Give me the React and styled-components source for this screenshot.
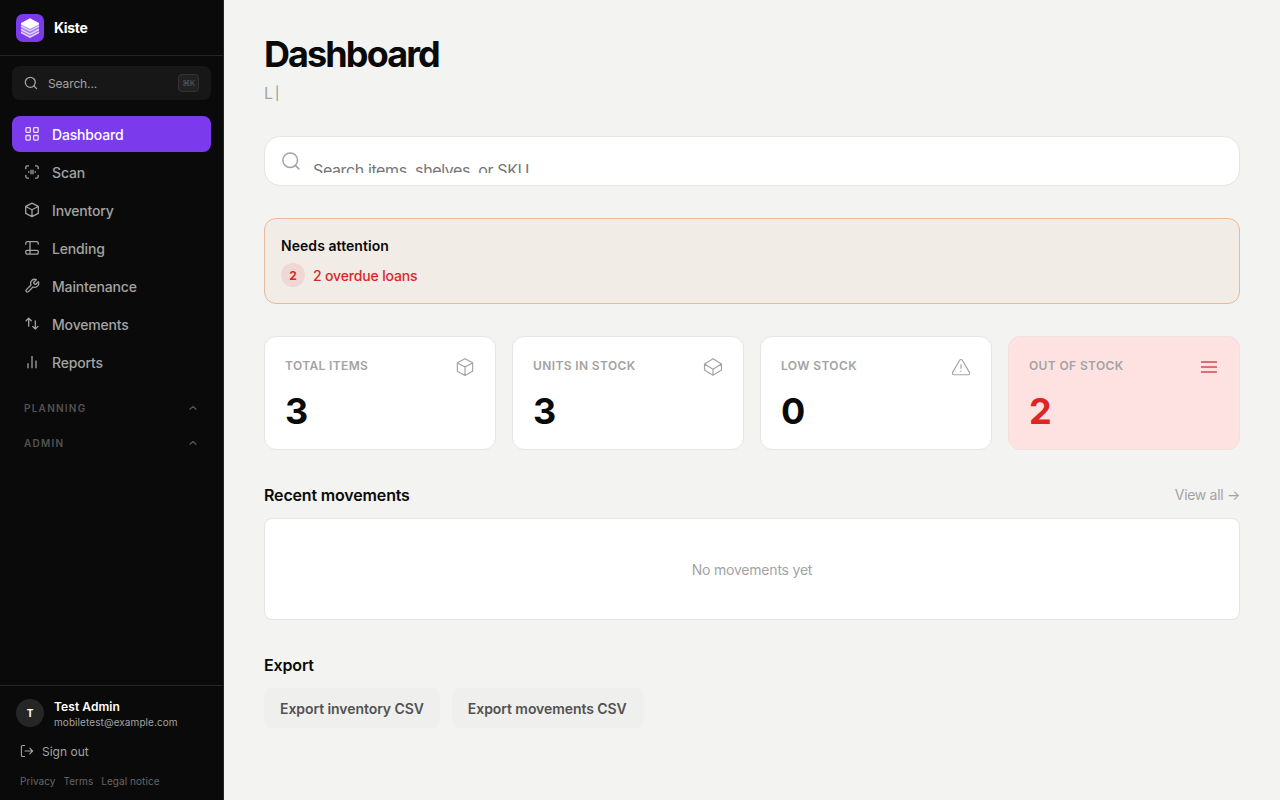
import React from "react";
import styled, { createGlobalStyle, css } from "styled-components";

const Global = createGlobalStyle`
  *, *::before, *::after { box-sizing: border-box; }
  body { margin: 0; background: #f3f3f1; color: #0a0a0a; font-family: Inter, "Liberation Sans", sans-serif; font-size: 14px; -webkit-font-smoothing: antialiased; }
  button, input { font: inherit; }
  h1, h2, p { margin: 0; }
  a { color: inherit; text-decoration: none; }
`;

const Shell = styled.div`
  display: flex;
  height: 100vh;
  overflow: hidden;
`;

/* ---- Sidebar ---- */
const Sidebar = styled.aside`
  width: 224px;
  flex: none;
  display: flex;
  flex-direction: column;
  background: #0a0a0a;
  border-right: 1px solid #262626;
`;
const Brand = styled.div`
  height: 56px;
  flex: none;
  display: flex;
  align-items: center;
  gap: 10px;
  padding: 0 16px;
  border-bottom: 1px solid #262626;
  color: #fff;
  font-size: 14px;
  font-weight: 700;
  letter-spacing: -0.025em;
`;
const Logo = styled.svg`
  width: 28px;
  height: 28px;
`;
const QuickSearch = styled.button`
  margin: 10px 12px 0;
  height: 34px;
  flex: none;
  display: flex;
  align-items: center;
  gap: 10px;
  padding: 0 12px;
  border: 0;
  border-radius: 8px;
  background: #171717;
  color: #a3a3a3;
  font-size: 12px;
  letter-spacing: -0.01em;
  text-align: left;
`;
const QuickLabel = styled.span`
  flex: 1;
`;
const Kbd = styled.kbd`
  width: 21px;
  height: 18px;
  display: grid;
  place-items: center;
  border: 1px solid #333;
  border-radius: 4px;
  background: #222;
  color: #5c5c5c;
  font-family: inherit;
  font-size: 8px;
  letter-spacing: -0.04em;
`;
const Nav = styled.nav`
  flex: 1;
  display: flex;
  flex-direction: column;
  gap: 2px;
  padding: 16px 12px;
`;
const NavItem = styled.a`
  height: 36px;
  display: flex;
  align-items: center;
  gap: 12px;
  padding: 0 12px;
  border-radius: 8px;
  color: #a3a3a3;
  font-size: 14px;
  font-weight: 500;
  line-height: 20px;
  letter-spacing: -0.012em;
  span { padding-top: 2px; }
  ${(p) => p.$active && css`
    background: #7c3aed;
    color: #fff;
    svg { opacity: 0.85; }
  `}
`;
const NavGroup = styled.button`
  height: 33px;
  display: flex;
  align-items: center;
  justify-content: space-between;
  padding: 0 13px 0 12px;
  border: 0;
  background: none;
  color: #525252;
  font-size: 10px;
  font-weight: 600;
  letter-spacing: 0.125em;
  text-transform: uppercase;
  &:first-of-type { margin-top: 9px; }
`;
const Account = styled.div`
  height: 115px;
  border-top: 1px solid #262626;
  padding: 13px 16px 0;
`;
const UserRow = styled.div`
  display: flex;
  align-items: flex-start;
  gap: 10px;
`;
const Avatar = styled.div`
  width: 28px;
  height: 28px;
  display: grid;
  place-items: center;
  border-radius: 50%;
  background: #262626;
  color: #fff;
  font-size: 10px;
  font-weight: 700;
`;
const UserName = styled.div`
  color: #fff;
  font-size: 12px;
  font-weight: 600;
  line-height: 16px;
  letter-spacing: 0.006em;
`;
const UserMail = styled.div`
  color: #a3a3a3;
  font-size: 10px;
  line-height: 15px;
  letter-spacing: 0.008em;
`;
const SignOut = styled.a`
  display: flex;
  align-items: center;
  gap: 8px;
  padding: 0 4px;
  margin-top: 13px;
  height: 16px;
  color: #a3a3a3;
  font-size: 12px;
`;
const Legal = styled.div`
  display: flex;
  gap: 8px;
  padding: 0 4px;
  margin-top: 15px;
  color: #666;
  font-size: 10px;
  line-height: 15px;
  letter-spacing: 0.006em;
`;

/* ---- Main ---- */
const Main = styled.main`
  flex: 1;
  padding: 32px 40px;
`;
const Title = styled.h1`
  font-size: 36px;
  font-weight: 700;
  line-height: 45px;
  letter-spacing: -0.053em;
`;
const Subtitle = styled.p`
  display: flex;
  align-items: center;
  height: 24px;
  margin-top: 4px;
  color: #a3a3a3;
  font-size: 16px;
  line-height: 24px;
`;
const Caret = styled.span`
  margin-left: 2px;
  color: #8f8f8f;
  font-size: 13px;
`;
const SearchBox = styled.label`
  margin-top: 31px;
  height: 50px;
  display: flex;
  gap: 12px;
  padding: 12px 16px;
  border: 1px solid #e5e5e5;
  border-radius: 16px;
  background: #fff;
  svg { margin-top: 2px; }
`;
const SearchHint = styled.span`
  height: 24px;
  overflow: hidden;
  padding-top: 8px;
  color: #757575;
  font-size: 16px;
  line-height: 26px;
  letter-spacing: -0.024em;
`;
const Attention = styled.section`
  margin-top: 32px;
  height: 86px;
  padding: 17px 16px;
  border: 1px solid #e9b99c;
  border-radius: 12px;
  background: #f2ece6;
`;
const AttentionTitle = styled.h2`
  font-size: 14px;
  font-weight: 600;
  line-height: 20px;
  letter-spacing: 0.004em;
`;
const Alert = styled.a`
  display: flex;
  align-items: center;
  gap: 8px;
  margin-top: 7px;
  color: #dc2626;
  font-weight: 500;
  letter-spacing: -0.011em;
`;
const Count = styled.span`
  width: 24px;
  height: 24px;
  display: grid;
  place-items: center;
  border-radius: 50%;
  background: #efd8d3;
  font-size: 12px;
  font-weight: 700;
`;
const Stats = styled.div`
  display: grid;
  grid-template-columns: repeat(4, 1fr);
  gap: 16px;
  margin-top: 32px;
`;
const StatCard = styled.div`
  height: 114px;
  padding: 20px;
  border: 1px solid ${(p) => (p.$danger ? "#f3e0de" : "#e5e5e5")};
  border-radius: 12px;
  background: ${(p) => (p.$danger ? "#fee2e2" : "#fff")};
  color: ${(p) => (p.$danger ? "#dc2626" : "#0a0a0a")};
`;
const StatHead = styled.div`
  display: flex;
  justify-content: space-between;
  height: 20px;
  color: #a3a3a3;
  svg { color: ${(p) => (p.$danger ? "#d97076" : "#a3a3a3")}; }
`;
const StatLabel = styled.span`
  font-size: 12px;
  font-weight: 600;
  line-height: 18px;
  letter-spacing: 0.031em;
  text-transform: uppercase;
`;
const StatValue = styled.div`
  margin-top: 12px;
  font-size: 36px;
  font-weight: 700;
  line-height: 45px;
  letter-spacing: -0.02em;
`;
const SectionHead = styled.div`
  display: flex;
  align-items: center;
  justify-content: space-between;
  margin-top: ${(p) => p.$top}px;
  height: 24px;
`;
const SectionTitle = styled.h2`
  font-size: 16px;
  font-weight: 600;
  line-height: 24px;
  letter-spacing: -0.01em;
`;
const ViewAll = styled.a`
  margin-bottom: 2px;
  color: #a3a3a3;
  font-size: 14px;
  letter-spacing: -0.022em;
`;
const Empty = styled.div`
  margin-top: 11px;
  height: 102px;
  display: grid;
  place-items: center;
  border: 1px solid #e5e5e5;
  border-radius: 8px;
  background: #fff;
  color: #a3a3a3;
  letter-spacing: -0.015em;
`;
const Exports = styled.div`
  display: flex;
  gap: 12px;
  margin-top: 11px;
`;
const ExportButton = styled.button`
  height: 40px;
  padding: 0 16px;
  border: 0;
  border-radius: 8px;
  background: #efefee;
  color: #525252;
  font-size: 14px;
  font-weight: 600;
  letter-spacing: -0.005em;
`;

const Icon = ({ size = 16, box = 16, stroke = 1.3, children }) => (
  <svg width={size} height={size} viewBox={`0 0 ${box} ${box}`} fill="none" stroke="currentColor" strokeWidth={stroke} strokeLinecap="round" strokeLinejoin="round">
    {children}
  </svg>
);

const nav = [
  ["Dashboard", <><rect x="1.9" y="1.7" width="4.4" height="4.6" rx="0.8" /><rect x="9.6" y="1.7" width="4.6" height="4.6" rx="0.8" /><rect x="1.9" y="9.5" width="4.4" height="4.6" rx="0.8" /><rect x="9.6" y="9.5" width="4.6" height="4.6" rx="0.8" /></>],
  ["Scan", <path d="M1.8 4.7V3.4a1.5 1.5 0 0 1 1.5-1.5h1.2M11.5 1.9h1.2a1.5 1.5 0 0 1 1.5 1.5v1.3M14.2 11.3v1.3a1.5 1.5 0 0 1-1.5 1.5h-1.2M4.5 14.1H3.3a1.5 1.5 0 0 1-1.5-1.5v-1.3M4.7 7.7v.6M7 6.2v3.6M9 6.2v3.6M11.3 7.7v.6" />],
  ["Inventory", <path d="M8 1.1l6.3 3.3v7L8 14.7l-6.3-3.3v-7zM1.8 4.5l6.2 3.3 6.2-3.3M8 7.8v6.8" />],
  ["Lending", <path d="M1.8 4.2V3.1a1.4 1.4 0 0 1 1.4-1.4h9.6a1.4 1.4 0 0 1 1.4 1.4v1.1M6 1.7v12.5M2.8 10.3h10.4a1 1 0 0 1 1 1v1.5a1.4 1.4 0 0 1-1.4 1.4H3.2a1.4 1.4 0 0 1-1.4-1.4v-1.5a1 1 0 0 1 1-1" />],
  ["Maintenance", <path transform="scale(.6667)" strokeWidth="1.95" d="M14.7 6.3a1 1 0 0 0 0 1.4l1.6 1.6a1 1 0 0 0 1.4 0l3.77-3.77a6 6 0 0 1-7.94 7.94l-6.91 6.91a2.12 2.12 0 0 1-3-3l6.91-6.91a6 6 0 0 1 7.94-7.94l-3.76 3.76z" />],
  ["Movements", <path d="M4.7 10.2V2.2M2.1 4.7l2.6-2.6 2.6 2.6M11.3 5v8M8.6 10.4l2.7 2.6 2.7-2.6" />],
  ["Reports", <path strokeLinecap="butt" d="M4 9.2v5M8 2v12.2M12 6.4v7.8" />],
];

const cube = <path d="M12 2l9.2 5v10L12 22.1 2.8 17V7zM2.9 7.1l9.1 5 9.1-5M12 12.2V22" />;
const openBox = <path d="M12 2l10.2 6.3v7.4L12 22 1.8 15.7V8.3zM1.9 8.5L12 14.8l10.1-6.3M12 14.8v7" />;
const warning = <path d="M10.4 3.9L1.9 18.5a1.9 1.9 0 0 0 1.6 2.8h17a1.9 1.9 0 0 0 1.6-2.8L13.6 3.9a1.9 1.9 0 0 0-3.2 0zM12 9v4.6M12 17v.3" />;
const lines = <path strokeWidth="2.3" strokeLinecap="butt" d="M2.4 6h19.2M2.4 12h19.2M2.4 18h19.2" />;

const stats = [
  ["Total items", 3, cube],
  ["Units in stock", 3, openBox],
  ["Low stock", 0, warning],
  ["Out of stock", 2, lines, true],
];

export default function App() {
  return (
    <Shell>
      <Global />
      <Sidebar>
        <Brand>
          <Logo viewBox="0 0 28 28">
            <rect width="28" height="28" rx="7" fill="#7c3aed" />
            <path d="M5 9.2l9 4.8 9-4.8v9.6L14 23.6l-9-4.8z" fill="#a77bf3" />
            <path d="M5 12.1l9 4.7 9-4.7M5 15.3l9 4.7 9-4.7M5 18.4l9 4.7 9-4.7" fill="none" stroke="#e4d6fc" strokeWidth="1.4" />
            <path d="M14 4.3l9 4.8v1.3l-9 4.7-9-4.7V9.1z" fill="#fff" />
          </Logo>
          <span>Kiste</span>
        </Brand>
        <QuickSearch>
          <Icon size={14} box={14}><circle cx="6.3" cy="6.3" r="5" /><path d="M10 10l2.6 2.6" /></Icon>
          <QuickLabel>Search...</QuickLabel>
          <Kbd>⌘K</Kbd>
        </QuickSearch>
        <Nav>
          {nav.map(([label, art], i) => (
            <NavItem key={label} $active={i === 0} href="#">
              <Icon>{art}</Icon>
              <span>{label}</span>
            </NavItem>
          ))}
          {["Planning", "Admin"].map((label) => (
            <NavGroup key={label}>
              {label}
              <Icon size={10} box={10}><path d="M2 6.3L5 3.4l3 2.9" /></Icon>
            </NavGroup>
          ))}
        </Nav>
        <Account>
          <UserRow>
            <Avatar>T</Avatar>
            <div>
              <UserName>Test Admin</UserName>
              <UserMail>mobiletest@example.com</UserMail>
            </div>
          </UserRow>
          <SignOut href="#">
            <Icon size={14} box={14} stroke={1.1}><path d="M4.6 1.5H2.4a1 1 0 0 0-1 1v9a1 1 0 0 0 1 1h2.2M5 7h7.6M9.8 4.2L12.6 7 9.8 9.8" /></Icon>
            Sign out
          </SignOut>
          <Legal><a href="#">Privacy</a><a href="#">Terms</a><a href="#">Legal notice</a></Legal>
        </Account>
      </Sidebar>
      <Main>
        <Title>Dashboard</Title>
        <Subtitle>L<Caret>|</Caret></Subtitle>
        <SearchBox>
          <Icon size={20} box={20} stroke={1.5}><g stroke="#a3a3a3"><circle cx="9.2" cy="9.2" r="7.3" /><path d="M14.6 14.6l3.3 3.3" /></g></Icon>
          <SearchHint>Search items, shelves, or SKU...</SearchHint>
        </SearchBox>
        <Attention>
          <AttentionTitle>Needs attention</AttentionTitle>
          <Alert href="#"><Count>2</Count>2 overdue loans</Alert>
        </Attention>
        <Stats>
          {stats.map(([label, value, art, danger]) => (
            <StatCard key={label} $danger={danger}>
              <StatHead $danger={danger}>
                <StatLabel>{label}</StatLabel>
                <Icon size={20} box={24} stroke={1.4}>{art}</Icon>
              </StatHead>
              <StatValue>{value}</StatValue>
            </StatCard>
          ))}
        </Stats>
        <SectionHead $top={33}>
          <SectionTitle>Recent movements</SectionTitle>
          <ViewAll href="#">View all →</ViewAll>
        </SectionHead>
        <Empty>No movements yet</Empty>
        <SectionHead $top={33}>
          <SectionTitle>Export</SectionTitle>
        </SectionHead>
        <Exports>
          <ExportButton>Export inventory CSV</ExportButton>
          <ExportButton>Export movements CSV</ExportButton>
        </Exports>
      </Main>
    </Shell>
  );
}
